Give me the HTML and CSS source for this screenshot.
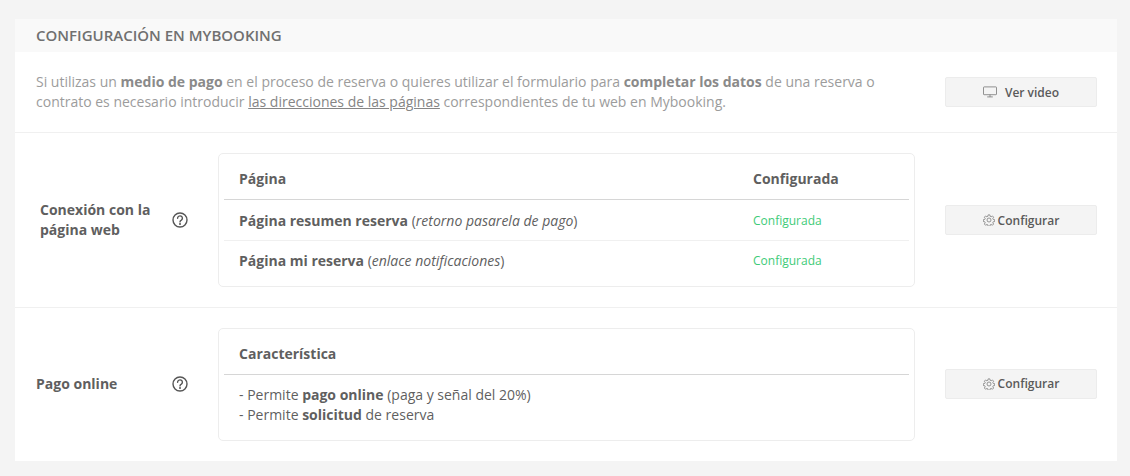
FILE: index.html
```html
<!DOCTYPE html>
<html lang="es">
<head>
<meta charset="utf-8">
<title>Configuración en Mybooking</title>
<link rel="stylesheet" href="styles.css">
</head>
<body>
<main class="card">
  <h2 class="card-title">CONFIGURACIÓN EN MYBOOKING</h2>
  <section class="intro">
    <p class="intro-text">Si utilizas un <b>medio de pago</b> en el proceso de reserva o quieres utilizar el formulario para <b>completar los datos</b> de una reserva o contrato es necesario introducir <a href="#">las direcciones de las páginas</a> correspondientes de tu web en Mybooking.</p>
    <button class="btn btn-video" type="button">
      <svg class="icon-monitor" viewBox="0 0 14 12" width="14" height="12" aria-hidden="true"><rect x="0.5" y="0.9" width="13" height="7.8" rx="0.6"/><path d="M7 8.7v2.1M4.2 10.9h5.6"/></svg>
      <span>Ver video</span>
    </button>
  </section>
  <section class="row row-web">
    <div class="row-label label-indent"><span>Conexión con la página web</span></div>
    <div class="help"><svg viewBox="0 0 16 16" width="16" height="16" aria-hidden="true"><circle cx="8" cy="8" r="7"/><path d="M5.6 6.2a2.4 2.3 0 1 1 3.8 1.9c-.9.5-1.4.9-1.4 1.8"/><circle class="dot" cx="8" cy="12" r="1"/></svg></div>
    <div class="panel panel-links">
      <div class="panel-grid panel-head"><span>Página</span><span>Configurada</span></div>
      <div class="panel-grid panel-row"><span><b>Página resumen reserva</b> (<i>retorno pasarela de pago</i>)</span><span class="ok">Configurada</span></div>
      <div class="panel-grid panel-row"><span><b>Página mi reserva</b> (<i>enlace notificaciones</i>)</span><span class="ok">Configurada</span></div>
    </div>
    <button class="btn btn-config" type="button">
      <svg class="icon-gear" viewBox="0 0 24 24" width="12" height="12" aria-hidden="true"><path d="M10.2 1.8h3.6l.6 3 1.9.8 2.5-1.7 2.5 2.5-1.7 2.5.8 1.9 3 .6v3.6l-3 .6-.8 1.9 1.7 2.5-2.5 2.5-2.5-1.7-1.9.8-.6 3h-3.6l-.6-3-1.9-.8-2.5 1.7-2.5-2.5 1.7-2.5-.8-1.9-3-.6v-3.6l3-.6.8-1.9-1.7-2.5 2.5-2.5 2.5 1.7 1.9-.8z"/><circle cx="12" cy="12" r="4"/></svg>
      <span>Configurar</span>
    </button>
  </section>
  <section class="row row-pay">
    <div class="row-label"><span>Pago online</span></div>
    <div class="help"><svg viewBox="0 0 16 16" width="16" height="16" aria-hidden="true"><circle cx="8" cy="8" r="7"/><path d="M5.6 6.2a2.4 2.3 0 1 1 3.8 1.9c-.9.5-1.4.9-1.4 1.8"/><circle class="dot" cx="8" cy="12" r="1"/></svg></div>
    <div class="panel">
      <div class="panel-grid panel-head"><span>Característica</span></div>
      <div class="panel-list">
        <div>- Permite <b>pago online</b> (paga y señal del 20%)</div>
        <div>- Permite <b>solicitud</b> de reserva</div>
      </div>
    </div>
    <button class="btn btn-config" type="button">
      <svg class="icon-gear" viewBox="0 0 24 24" width="12" height="12" aria-hidden="true"><path d="M10.2 1.8h3.6l.6 3 1.9.8 2.5-1.7 2.5 2.5-1.7 2.5.8 1.9 3 .6v3.6l-3 .6-.8 1.9 1.7 2.5-2.5 2.5-2.5-1.7-1.9.8-.6 3h-3.6l-.6-3-1.9-.8-2.5 1.7-2.5-2.5 1.7-2.5-.8-1.9-3-.6v-3.6l3-.6.8-1.9-1.7-2.5 2.5-2.5 2.5 1.7 1.9-.8z"/><circle cx="12" cy="12" r="4"/></svg>
      <span>Configurar</span>
    </button>
  </section>
</main>
</body>
</html>
```

FILE: styles.css
```css
* { box-sizing: border-box; }
html, body { margin: 0; height: 100%; }
body {
  background: #f4f4f4;
  padding: 19px 13px 15px 15px;
  font-family: "Open Sans", "Liberation Sans", sans-serif;
  font-size: 14px;
  line-height: 20px;
  color: #575962;
  overflow: hidden;
}
.card { background: #fff; height: 442px; display: flex; flex-direction: column; }
.card-title {
  margin: 0;
  height: 33px;
  padding: 6px 21px 0;
  background: #f9f9f9;
  font-size: 15px;
  font-weight: 600;
  line-height: 20px;
  color: #707070;
}
.intro {
  height: 81px;
  padding: 20px 20px 0 21px;
  display: grid;
  grid-template-columns: 1fr 152px;
  column-gap: 50px;
  border-bottom: 1px solid #f0f0f0;
}
.intro-text { margin: 0; color: #9c9c9c; }
.intro-text b { font-weight: 700; color: #8a8a8a; }
.intro-text a { color: #858585; text-decoration: underline; }
.btn {
  width: 152px;
  height: 30px;
  display: flex;
  align-items: center;
  justify-content: center;
  background: #f4f4f4;
  border: 1px solid #ececec;
  border-radius: 2px;
  font-family: inherit;
  font-size: 12px;
  font-weight: 600;
  color: #5a5a5a;
  padding: 0;
}
.btn-video { margin-top: 5px; gap: 8px; }
.btn-config { gap: 3px; }
.icon-monitor { fill: none; stroke: #777; stroke-width: .8; }
.icon-gear { fill: none; stroke: #777; stroke-width: 1.5; stroke-linejoin: round; }
.row {
  display: grid;
  grid-template-columns: 136px 46px 697px 182px;
  align-items: center;
  padding-left: 21px;
}
.row > .btn { margin-left: 30px; }
.row-web { height: 175px; border-bottom: 1px solid #f0f0f0; }
.row-pay { flex: 1; }
.row-pay > .row-label, .row-pay > .help, .row-pay > .btn { margin-bottom: 2px; }
.row-label { font-weight: 700; color: #5f5f5f; }
.label-indent { padding: 0 12px 0 4px; }
.help { display: flex; }
.help svg { fill: none; stroke: #555; stroke-width: 1.4; stroke-linecap: round; }
.help .dot { fill: #555; stroke: none; }
.panel { border: 1px solid #ededed; border-radius: 5px; padding: 0 5px; color: #5f5f5f; }
.panel-links { padding-bottom: 4px; }
.panel-grid { display: grid; grid-template-columns: 514px 1fr; padding-left: 15px; }
.panel-head { height: 46px; padding-top: 5px; align-items: center; font-weight: 700; border-bottom: 1px solid #d6d6d6; }
.panel-row { height: 40px; padding-top: 1px; align-items: center; }
.panel-row + .panel-row { height: 42px; padding-top: 0; padding-bottom: 2px; border-top: 1px solid #f0f0f0; }
.ok { color: #3ecb78; font-size: 12px; }
.panel-list { padding: 10px 15px 15px; }
```
